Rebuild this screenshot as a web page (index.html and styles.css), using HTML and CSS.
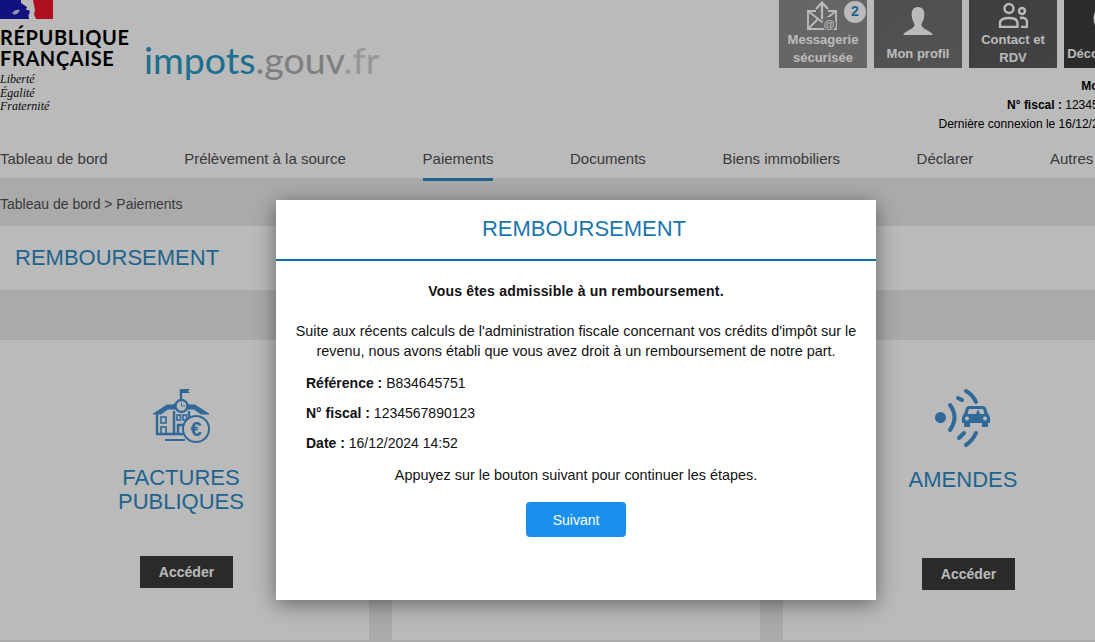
FILE: index.html
```html
<!DOCTYPE html>
<html lang="fr">
<head>
    <meta charset="UTF-8">
    <title>Paiements - impots.gouv.fr</title>
    <link rel="stylesheet" href="styles.css">
</head>
<body>
    <header class="top">
        <div class="logos">
            <div class="marianne">
                <svg class="flag" width="53" height="19" viewBox="0 0 53 19">
                    <rect width="30" height="19" fill="#1a1aaf"/>
                    <rect x="30" width="23" height="19" fill="#f0162c"/>
                    <path d="M21 0 H33 L35 10 L34 14 L36 19 H29 L28.500 15 C30 13 30 12 29 10 L26 10 L27 7 L24 5 L21 3 Z" fill="#fff"/>
                    <path d="M12 13 C14 10 18 9 20 10 L18 13 C16 15 14 15 12 13 Z" fill="#c9cdf0"/>
                </svg>
                <div class="rf">RÉPUBLIQUE<br>FRANÇAISE</div>
                <div class="devise">Liberté<br>Égalité<br>Fraternité</div>
            </div>
            <div class="site-name"><span class="blue">impots</span><span class="dot-grey">.gouv</span><span class="light-grey">.fr</span></div>
        </div>
        <div class="account">
            <div class="tiles">
                <a class="tile tile-1" href="#">
                    <svg class="ic-mail" width="34" height="32" viewBox="27 1 34 32" fill="none" stroke="#fff" stroke-width="1.800">
                        <path d="M37 11 H29 V29 H57 V11 H49"/>
                        <path d="M29 11 L43 22 L57 11"/>
                        <path d="M29 29 L39 19"/>
                        <path d="M43 19 V3 M37 9 L43 2.500 L49 9" stroke-width="2.200"/>
                        <circle cx="50" cy="24" r="7" fill="#8d8d8d" stroke="none"/>
                        <text x="50" y="28" text-anchor="middle" class="at">@</text>
                    </svg>
                    <span>Messagerie<br>sécurisée</span>
                    <b class="badge">2</b>
                </a>
                <a class="tile tile-2" href="#">
                    <svg class="ic-person" width="30" height="28" viewBox="1 2 30 29" fill="#fff">
                        <path d="M16 2 C21 2 23 6 22.500 11 C22 16 20 18 19.500 21 C21 25 27 26 31 30 L31 31 H1 V30 C5 26 11 25 12.500 21 C12 18 10 16 9.500 11 C9 6 11 2 16 2 Z"/>
                    </svg>
                    <span class="one-line">Mon profil</span>
                </a>
                <a class="tile tile-3" href="#">
                    <svg class="ic-contact" width="30" height="26" viewBox="0 0 30 26" fill="none" stroke="#fff" stroke-width="2.400">
                        <circle cx="11" cy="6.500" r="4.500"/>
                        <circle cx="24" cy="9" r="3"/>
                        <path d="M2 25 V21 C2 17 6 16 11 16 C16 16 19.500 17 19.500 21 V25 Z"/>
                        <path d="M22 16 C26 15 29 17 29 20 V25 H23"/>
                    </svg>
                    <span>Contact et<br>RDV</span>
                </a>
                <a class="tile tile-4" href="#">
                    <svg width="32" height="32" viewBox="0 0 32 32" fill="none" stroke="#fff" stroke-width="3">
                        <path d="M10 6 A13 13 0 1 0 22 6"/>
                        <path d="M16 2 V14"/>
                    </svg>
                    <span class="one-line">Déconnexion</span>
                </a>
            </div>
            <div class="who">
                <p><strong>Mon compte</strong></p>
                <p><strong>N° fiscal :</strong> 1234567890123</p>
                <p>Dernière connexion le 16/12/2024 14:52</p>
            </div>
        </div>
    </header>

    <nav class="menu">
        <a href="#">Tableau de bord</a>
        <a href="#">Prélèvement à la source</a>
        <a href="#" class="active">Paiements</a>
        <a href="#">Documents</a>
        <a href="#">Biens immobiliers</a>
        <a href="#">Déclarer</a>
        <a href="#">Autres services</a>
    </nav>

    <div class="breadcrumb">Tableau de bord &gt; Paiements</div>
    <div class="page-title"><h1>REMBOURSEMENT</h1></div>
    <div class="band"></div>

    <main class="cards">
        <section class="card">
            <div class="card-icon">
                <svg width="58" height="58" viewBox="7 8 58 58" fill="none" stroke="#4391d2" stroke-width="2.400">
                    <path d="M36 20 V9"/>
                    <path d="M36 9 H45 L43 11 L45 13 H36 Z" fill="#4391d2" stroke="none"/>
                    <path d="M8 34 L22 25 H28 L36 19 L44 25 H50 L64 34 H56 L49 29 H23 L16 34 Z" fill="#4391d2" stroke-width="1"/>
                    <circle cx="36.500" cy="26" r="6" fill="#fff"/>
                    <path d="M36.500 22.500 V26 H40" stroke-width="1"/>
                    <path d="M12 34 V54 H42"/>
                    <path d="M29 31 V54 M44 31 V42"/>
                    <rect x="16" y="37" width="5" height="6" stroke-width="1.600"/>
                    <rect x="16" y="47" width="5" height="7" stroke-width="1.600"/>
                    <rect x="32" y="35" width="3.500" height="5" stroke-width="1.600"/>
                    <rect x="38" y="35" width="3.500" height="5" stroke-width="1.600"/>
                    <path d="M33 54 V45 H40"/>
                    <path d="M20 60 H40" stroke-width="2"/>
                    <circle cx="51" cy="49" r="13" fill="#fff" stroke-width="2"/>
                    <text x="51" y="56" text-anchor="middle" class="euro">€</text>
                </svg>
            </div>
            <h2>FACTURES<br>PUBLIQUES</h2>
            <a class="btn-go" href="#">Accéder</a>
        </section>
        <section class="card"></section>
        <section class="card card-right">
            <div class="card-icon icon-tall">
                <svg width="56" height="60" viewBox="9 6 56 60" fill="none" stroke="#4391d2" stroke-width="4" stroke-linecap="round">
                    <circle cx="14.500" cy="35.500" r="5.500" fill="#4391d2" stroke="none"/>
                    <path d="M24 23 Q33 35 24 48"/>
                    <path d="M40 9 Q47 13 50 20"/>
                    <path d="M32 16 L36 18"/>
                    <path d="M33 56 L38 51"/>
                    <path d="M40 63 Q47 58 50 51"/>
                    <path d="M43 24 H57 C58.500 24 59.500 25 60 26 L62 32 C63 33 64 34 64 36 V41 H62 V45 H56 V41 H44 V45 H38 V41 H36 V36 C36 34 37 33 38 32 L40 26 C40.500 25 41.500 24 43 24 Z M43 27 L41.500 32 H58.500 L57 27 Z" fill="#4391d2" fill-rule="evenodd" stroke="none"/>
                    <path d="M52 27 L50 32 H54 Z" fill="#4391d2" stroke="none"/>
                    <circle cx="41" cy="36.500" r="2" fill="#fff" stroke="none"/>
                    <circle cx="59" cy="36.500" r="2" fill="#fff" stroke="none"/>
                </svg>
            </div>
            <h2>AMENDES</h2>
            <a class="btn-go" href="#">Accéder</a>
        </section>
    </main>

    <div class="overlay"></div>

    <div class="modal">
        <div class="modal-head">REMBOURSEMENT</div>
        <div class="modal-body">
            <p class="lead">Vous êtes admissible à un remboursement.</p>
            <p class="intro">Suite aux récents calculs de l'administration fiscale concernant vos crédits d'impôt sur le revenu, nous avons établi que vous avez droit à un remboursement de notre part.</p>
            <ul class="facts">
                <li><strong>Référence :</strong> B834645751</li>
                <li><strong>N° fiscal :</strong> 1234567890123</li>
                <li><strong>Date :</strong> 16/12/2024 14:52</li>
            </ul>
            <p class="next">Appuyez sur le bouton suivant pour continuer les étapes.</p>
            <button class="btn-next" type="button">Suivant</button>
        </div>
    </div>
</body>
</html>
```

FILE: styles.css
```css
html, body {
    height: 100%;
}
body {
    margin: 0;
    font-family: "Liberation Sans", Arial, sans-serif;
    font-size: 14px;
    color: #000;
    background: #eaeaea;
    overflow: hidden;
    position: relative;
}
a {
    text-decoration: none;
    color: inherit;
}

/* header */
.top {
    display: flex;
    justify-content: space-between;
    height: 135px;
    background: #fff;
}
.logos {
    display: flex;
    align-items: flex-start;
}
.marianne {
    width: 144px;
}
.flag {
    display: block;
}
.rf {
    margin-top: 8px;
    font-family: Lato, sans-serif;
    font-weight: 700;
    font-size: 20px;
    line-height: 21px;
    letter-spacing: 0.6px;
    color: #000;
}
.devise {
    margin-top: 4px;
    font-family: "Liberation Serif", serif;
    font-style: italic;
    font-size: 12px;
    line-height: 13.500px;
    color: #111;
}
.site-name {
    margin-top: 35px;
    font-family: Lato, sans-serif;
    font-weight: 400;
    font-size: 37.500px;
    line-height: 50px;
}
.blue {
    color: #2598c4;
}
.dot-grey {
    color: #aeaeae;
}
.light-grey {
    color: #d0d0d0;
}
.account {
    flex: 0 0 373px;
    margin-right: -57px;
}
.tiles {
    display: flex;
    gap: 7px;
}
.tile {
    position: relative;
    width: 88px;
    height: 68px;
    box-sizing: border-box;
    display: flex;
    flex-direction: column;
    align-items: center;
    justify-content: flex-end;
    color: #fff;
    font-weight: 700;
    font-size: 13px;
    line-height: 18px;
    text-align: center;
    overflow: hidden;
    padding-bottom: 1px;
}
.tile svg {
    position: absolute;
    top: 1px;
}
.tile .ic-person {
    top: 7px;
}
.tile .ic-contact {
    top: 2px;
}
.tile .one-line {
    margin-bottom: 4px;
}
.tile-1 { background: #8d8d8d; }
.tile-2 { background: linear-gradient(135deg, #6c6c6c, #727272); }
.tile-3 { background: linear-gradient(135deg, #565656, #5c5c5c); }
.tile-4 { background: #3b3b3b; white-space: nowrap; }
.at {
    font-family: "Liberation Sans", sans-serif;
    font-size: 11px;
    font-weight: 700;
    fill: #fff;
    stroke: none;
}
.badge {
    position: absolute;
    top: 1px;
    right: 1px;
    width: 22px;
    height: 22px;
    border-radius: 50%;
    background: #fff;
    color: #2b89c4;
    font-size: 14px;
    line-height: 21px;
}
.who {
    margin-top: 9px;
    text-align: right;
    font-size: 12px;
    line-height: 19px;
    white-space: nowrap;
}
.who p {
    margin: 0;
}

/* menu */
.menu {
    display: flex;
    gap: 76.600px;
    height: 43px;
    background: #fff;
    white-space: nowrap;
    font-size: 15px;
    color: #505050;
}
.menu a {
    line-height: 48px;
    height: 46px;
    box-sizing: border-box;
}
.menu a.active {
    border-bottom: 3px solid #2b89c4;
}

.breadcrumb {
    height: 48px;
    line-height: 52px;
    font-size: 14px;
    color: #505050;
    background: #eaeaea;
}
.page-title {
    height: 64px;
    background: #fff;
}
.page-title h1 {
    margin: 0;
    padding-left: 15px;
    font-weight: 400;
    font-size: 22px;
    line-height: 64px;
    color: #2b89c4;
}
.band {
    height: 50px;
    background: #eaeaea;
}

/* cards */
.cards {
    display: grid;
    grid-template-columns: 369px 368px 369px;
    gap: 23px;
    width: 1152px;
    height: 300px;
    background: #eaeaea;
}
.card {
    background: #fff;
    text-align: center;
    display: flex;
    flex-direction: column;
    align-items: center;
    padding-top: 48px;
    box-sizing: border-box;
    padding-right: 7px;
}
.card-right {
    padding-right: 9px;
}
.card-icon {
    height: 58px;
}
.icon-tall {
    height: 60px;
}
.card-icon svg {
    display: block;
}
.card h2 {
    margin: 20px 0 0;
    min-height: 48px;
    font-weight: 400;
    font-size: 22px;
    line-height: 24px;
    color: #2b89c4;
}
.btn-go {
    margin-top: 42px;
    margin-left: 11px;
    width: 93px;
    height: 32px;
    background: #3a3a3a;
    color: #fff;
    font-weight: 700;
    font-size: 14px;
    line-height: 33px;
}
.euro {
    font-family: "Liberation Sans", sans-serif;
    font-size: 20px;
    font-weight: 700;
    fill: #4391d2;
    stroke: none;
}

/* popup */
.overlay {
    position: absolute;
    inset: 0;
    background: rgba(0, 0, 0, 0.27);
}
.modal {
    position: absolute;
    top: 200px;
    left: 276px;
    width: 600px;
    height: 400px;
    background: #fff;
    box-shadow: 0 4px 20px rgba(0, 0, 0, 0.45);
}
.modal-head {
    height: 59px;
    padding-left: 16px;
    border-bottom: 2px solid #0e6ea8;
    text-align: center;
    font-size: 22px;
    line-height: 57px;
    color: #1a75ad;
}
.modal-body {
    padding: 0 15px;
    text-align: center;
    color: #111;
    line-height: 20px;
}
.lead {
    margin: 20px 0 0;
    font-weight: 700;
    letter-spacing: 0.2px;
}
.intro {
    margin: 20px 0 0;
    font-size: 14.400px;
}
.facts {
    list-style: none;
    margin: 12px 0 0;
    padding: 0 0 0 15px;
    text-align: left;
}
.facts li {
    margin-bottom: 10px;
}
.next {
    margin: 12px 0 0;
    font-size: 14.400px;
}
.btn-next {
    display: block;
    margin: 17px auto 0;
    width: 100px;
    height: 35px;
    border: 0;
    border-radius: 4px;
    background: #1a90ee;
    color: #fff;
    font-family: inherit;
    font-size: 14px;
}
```
